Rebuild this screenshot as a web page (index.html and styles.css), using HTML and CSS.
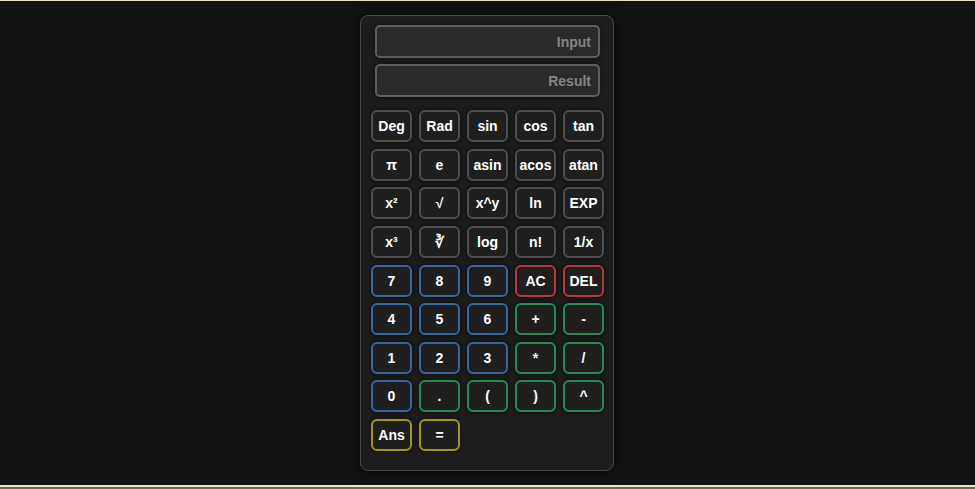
FILE: index.html
```html
<!DOCTYPE html>
<html>
<head>
<meta charset="utf-8">
<link rel="stylesheet" href="styles.css">
</head>
<body>
<div class="page">
  <div class="calc">
    <div class="display">
      <input class="field" type="text" placeholder="Input">
      <input class="field" type="text" placeholder="Result">
    </div>
    <div class="keys">
      <button class="key">Deg</button>
      <button class="key">Rad</button>
      <button class="key">sin</button>
      <button class="key">cos</button>
      <button class="key">tan</button>
      <button class="key">π</button>
      <button class="key">e</button>
      <button class="key">asin</button>
      <button class="key">acos</button>
      <button class="key">atan</button>
      <button class="key">x²</button>
      <button class="key">√</button>
      <button class="key">x^y</button>
      <button class="key">ln</button>
      <button class="key">EXP</button>
      <button class="key">x³</button>
      <button class="key">∛</button>
      <button class="key">log</button>
      <button class="key">n!</button>
      <button class="key">1/x</button>
      <button class="key num">7</button>
      <button class="key num">8</button>
      <button class="key num">9</button>
      <button class="key clr">AC</button>
      <button class="key clr">DEL</button>
      <button class="key num">4</button>
      <button class="key num">5</button>
      <button class="key num">6</button>
      <button class="key op">+</button>
      <button class="key op">-</button>
      <button class="key num">1</button>
      <button class="key num">2</button>
      <button class="key num">3</button>
      <button class="key op">*</button>
      <button class="key op">/</button>
      <button class="key num">0</button>
      <button class="key op">.</button>
      <button class="key op">(</button>
      <button class="key op">)</button>
      <button class="key op">^</button>
      <button class="key eq">Ans</button>
      <button class="key eq">=</button>
    </div>
  </div>
</div>
<div class="edge"></div>
</body>
</html>
```
FILE: styles.css
```css
html {
  background: #eee3c6;
}
body {
  margin: 0;
  padding-top: 1px;
  font-family: "Liberation Sans", Arial, sans-serif;
}
.page {
  height: 484px;
  background: #121212;
  display: flex;
  justify-content: center;
  align-items: flex-start;
  padding: 14px 1px 0 0;
  box-sizing: border-box;
}
.calc {
  width: 254px;
  height: 456px;
  box-sizing: border-box;
  background: #1e1e1e;
  border: 1px solid #4a4a4a;
  border-radius: 8px;
  box-shadow: 0 0 10px rgba(0, 0, 0, 0.6);
  padding: 9px 9px 0 10px;
}
.display {
  display: flex;
  flex-direction: column;
  gap: 6px;
  padding: 0 4px 0 4px;
}
.field {
  height: 33px;
  box-sizing: border-box;
  background: #2a2a2a;
  border: 2px solid #5e5e5e;
  border-radius: 5px;
  color: #ddd;
  text-align: right;
  font-family: "Liberation Sans", Arial, sans-serif;
  font-weight: bold;
  font-size: 14px;
  padding: 0 7px;
  outline: none;
  box-shadow: 0 0 6px rgba(0, 0, 0, 0.5);
}
.field::placeholder {
  color: #858585;
}
.keys {
  margin-top: 13px;
  display: grid;
  grid-template-columns: repeat(5, 41px);
  grid-auto-rows: 32px;
  column-gap: 7px;
  row-gap: 6.625px;
}
.key {
  background: #1f1f1f;
  border: 2px solid #4f4f4f;
  border-radius: 6px;
  color: #fff;
  font-family: "Liberation Sans", Arial, sans-serif;
  font-weight: bold;
  font-size: 14px;
  padding: 0;
  box-shadow: 0 0 5px rgba(0, 0, 0, 0.7);
}
.key.num {
  border-color: #3a659e;
}
.key.clr {
  border-color: #b03a40;
}
.key.op {
  border-color: #2d8a55;
}
.key.eq {
  border-color: #a49526;
}
.edge {
  height: 2px;
  background: #eee3c6;
  border-bottom: 2px solid #6b6658;
}
```
